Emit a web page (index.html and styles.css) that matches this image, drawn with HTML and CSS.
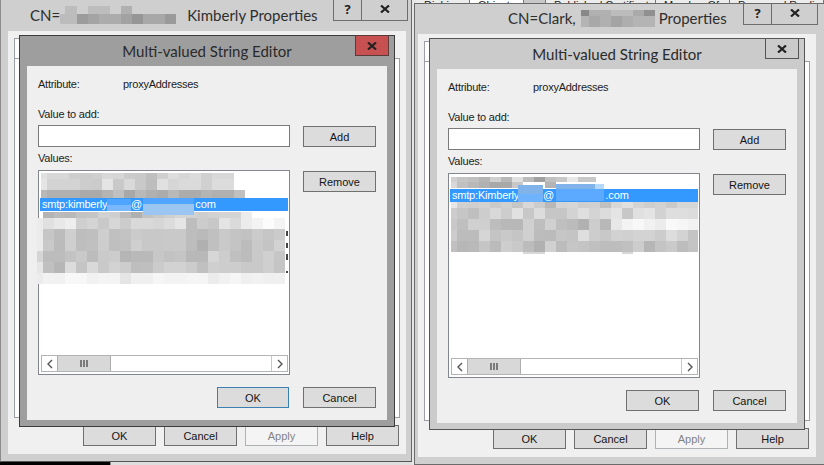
FILE: index.html
```html
<!DOCTYPE html>
<html lang="en">
<head>
<meta charset="utf-8">
<title>Multi-valued String Editor</title>
<link rel="stylesheet" href="styles.css">
</head>
<body>
<div class="tabs-behind">
  <span class="bt bt-a">Dial-in</span><span class="bt bt-b">Object</span><span class="bt bt-c"></span><span class="bt bt-d">Published Certificates</span><span class="bt bt-e">Member Of</span><span class="bt bt-f">Password Replication</span>
</div>
<div class="under"></div>

<section class="win win-left">
  <header class="titlebar">
    <h1 class="wintitle">CN=<svg class="nameblur" width="123" height="18" viewBox="58 6 123 18"><rect x="63" y="6" width="12" height="8" fill="#bdbdbd"/><rect x="86" y="6" width="22" height="8" fill="#bdbdbd"/><rect x="119" y="6" width="11" height="8" fill="#b0b0b0"/><rect x="58" y="14" width="17" height="10" fill="#bcbcbc"/><rect x="75" y="14" width="11" height="10" fill="#9c9c9c"/><rect x="86" y="14" width="11" height="10" fill="#a4a4a4"/><rect x="97" y="14" width="22" height="10" fill="#acacac"/><rect x="119" y="14" width="11" height="10" fill="#a2a2a2"/><rect x="130" y="14" width="11" height="10" fill="#969696"/><rect x="141" y="14" width="22" height="10" fill="#a8a8a8"/><rect x="163" y="14" width="11" height="10" fill="#9a9a9a"/></svg><span class="wintitle-end">Kimberly Properties</span></h1>
    <div class="capbtns">
      <span class="capbtn cap-help">?</span>
      <span class="capbtn cap-close"><svg width="10" height="8" viewBox="0 0 10 8"><path class="xmark" d="M1 0.5 9 7.5M9 0.5 1 7.5"/></svg></span>
    </div>
  </header>
  <div class="client">
    <div class="tabstrip"><div class="tab"></div></div>
    <div class="tabpanel"></div>
    <div class="actions">
      <button class="btn">OK</button><button class="btn">Cancel</button><button class="btn btn-off">Apply</button><button class="btn">Help</button>
    </div>
    <section class="dialog dialog-active">
      <header class="dlg-title">
        <h2 class="dlg-heading">Multi-valued String Editor</h2>
        <span class="dlg-close"><svg width="10" height="8" viewBox="0 0 10 8"><path class="xmark" d="M1 0.5 9 7.5M9 0.5 1 7.5"/></svg></span>
      </header>
      <div class="dlg-client">
        <div class="attr"><span class="attr-k">Attribute:</span><span>proxyAddresses</span></div>
        <div class="body">
          <div class="fields">
            <label class="lbl">Value to add:</label>
            <div class="input"></div>
            <label class="lbl lbl-values">Values:</label>
            <div class="list">
              <div class="rows rows-left"><div class="sel"><span class="t-a">smtp:kimberly.</span>@<span class="gap-b"></span>com</div></div>
              <div class="hscroll">
                <span class="sb-btn"><svg width="8" height="10" viewBox="0 0 8 10"><path class="chev" d="M6 1 2 5 6 9"/></svg></span>
                <span class="sb-thumb"><svg width="9" height="7" viewBox="0 0 9 7"><path class="grip" d="M1 0V7M4 0V7M7 0V7"/></svg></span>
                <span class="sb-track"></span>
                <span class="sb-btn sb-end"><svg width="8" height="10" viewBox="0 0 8 10"><path class="chev" d="M2 1 6 5 2 9"/></svg></span>
              </div>
              <svg class="blur" width="252" height="188" viewBox="38 170 252 188">
                <g class="h6" transform="translate(0 173)"><rect x="41" width="6" fill="#e0e0e0"/><rect x="47" fill="#d8d8d8"/><rect x="58" fill="#d8d8d8"/><rect x="69" fill="#cdcdcd"/><rect x="80" fill="#cbcbcb"/><rect x="91" fill="#cfcfcf"/><rect x="102" fill="#d8d8d8"/><rect x="113" fill="#d6d6d6"/><rect x="124" fill="#cbcbcb"/><rect x="135" fill="#c9c9c9"/><rect x="146" fill="#bfbfbf"/><rect x="157" fill="#cfcfcf"/><rect x="168" fill="#dddddd"/><rect x="179" fill="#d6d6d6"/><rect x="190" fill="#dcdcdc"/><rect x="201" fill="#d0d0d0"/><rect x="212" fill="#d8d8d8"/><rect x="223" fill="#d8d8d8"/></g>
                <g transform="translate(0 179)"><rect x="41" width="6" fill="#e5e5e5"/><rect x="47" fill="#d3d3d3"/><rect x="58" fill="#d3d3d3"/><rect x="69" fill="#d3d3d3"/><rect x="80" fill="#cdcdcd"/><rect x="91" fill="#cbcbcb"/><rect x="102" fill="#e4e4e4"/><rect x="113" fill="#c9c9c9"/><rect x="124" fill="#d9d9d9"/><rect x="135" fill="#c9c9c9"/><rect x="146" fill="#bdbdbd"/><rect x="157" fill="#e0e0e0"/><rect x="168" fill="#d6d6d6"/><rect x="179" fill="#dadada"/><rect x="190" fill="#dadada"/><rect x="201" fill="#d0d0d0"/><rect x="212" fill="#dcdcdc"/><rect x="223" fill="#dcdcdc"/></g>
                <g class="h8" transform="translate(0 190)"><rect x="41" width="6" fill="#b8b8b8"/><rect x="47" fill="#b0b0b0"/><rect x="58" fill="#b0b0b0"/><rect x="69" fill="#b0b0b0"/><rect x="80" fill="#aaaaaa"/><rect x="91" fill="#aaaaaa"/><rect x="102" fill="#b4b4b4"/><rect x="113" fill="#c0c0c0"/><rect x="124" fill="#a8a8a8"/><rect x="135" fill="#b8b8b8"/><rect x="146" fill="#b0b0b0"/><rect x="157" fill="#acacac"/><rect x="168" fill="#b8b8b8"/><rect x="179" fill="#acacac"/><rect x="190" fill="#acacac"/><rect x="201" fill="#b4b4b4"/><rect x="212" fill="#b0b0b0"/><rect x="223" fill="#b0b0b0"/><rect x="234" fill="#c0c0c0"/></g>
                <g class="h6" transform="translate(0 212)"><rect x="43" fill="#b4b4b4"/><rect x="54" fill="#bbbbbb"/><rect x="65" fill="#b9b9b9"/><rect x="76" fill="#c3c3c3"/><rect x="87" fill="#c5c5c5"/><rect x="98" fill="#d2d2d2"/><rect x="109" fill="#cfcfcf"/><rect x="120" fill="#bdbdbd"/><rect x="131" fill="#b0b0b0"/><rect x="142" fill="#c2c2c2"/><rect x="153" fill="#c9c9c9"/><rect x="164" fill="#cfcfcf"/><rect x="175" fill="#d5d5d5"/><rect x="186" fill="#d2d2d2"/><rect x="197" fill="#cecece"/><rect x="208" fill="#d2d2d2"/><rect x="219" fill="#d4d4d4"/><rect x="230" fill="#d4d4d4"/><rect x="241" fill="#ececec"/></g>
                <g transform="translate(0 218)"><rect x="37" width="6" fill="#ebebeb"/><rect x="43" fill="#e0e0e0"/><rect x="54" fill="#e8e8e8"/><rect x="65" fill="#eeeeee"/><rect x="76" fill="#cfcfcf"/><rect x="87" fill="#d4d4d4"/><rect x="98" fill="#c9c9c9"/><rect x="109" fill="#d6d6d6"/><rect x="120" fill="#cccccc"/><rect x="131" fill="#d9d9d9"/><rect x="142" fill="#d9d9d9"/><rect x="153" fill="#d6d6d6"/><rect x="164" fill="#dcdcdc"/><rect x="175" fill="#e5e5e5"/><rect x="186" fill="#bdbdbd"/><rect x="197" fill="#cccccc"/><rect x="208" fill="#c8c8c8"/><rect x="219" fill="#e4e4e4"/><rect x="230" fill="#dadada"/><rect x="241" fill="#ececec"/><rect x="252" fill="#f3f3f3"/><rect x="263" fill="#fcfcfc"/><rect x="274" fill="#f4f4f4"/></g>
                <g transform="translate(0 229)"><rect x="37" width="6" fill="#ebebeb"/><rect x="43" fill="#c6c6c6"/><rect x="54" fill="#bcbcbc"/><rect x="65" fill="#cfcfcf"/><rect x="76" fill="#bdbdbd"/><rect x="87" fill="#bfbfbf"/><rect x="98" fill="#cecece"/><rect x="109" fill="#c0c0c0"/><rect x="120" fill="#c3c3c3"/><rect x="131" fill="#cbcbcb"/><rect x="142" fill="#c8c8c8"/><rect x="153" fill="#c8c8c8"/><rect x="164" fill="#c9c9c9"/><rect x="175" fill="#c9c9c9"/><rect x="186" fill="#bdbdbd"/><rect x="197" fill="#bababa"/><rect x="208" fill="#c0c0c0"/><rect x="219" fill="#c9c9c9"/><rect x="230" fill="#c4c4c4"/><rect x="241" fill="#c2c2c2"/><rect x="252" fill="#cbcbcb"/><rect x="263" fill="#c6c6c6"/><rect x="274" fill="#cbcbcb"/></g>
                <g transform="translate(0 240)"><rect x="37" width="6" fill="#ebebeb"/><rect x="43" fill="#c9c9c9"/><rect x="54" fill="#bbbbbb"/><rect x="65" fill="#cfcfcf"/><rect x="76" fill="#bebebe"/><rect x="87" fill="#c0c0c0"/><rect x="98" fill="#cdcdcd"/><rect x="109" fill="#bfbfbf"/><rect x="120" fill="#c1c1c1"/><rect x="131" fill="#cfcfcf"/><rect x="142" fill="#c8c8c8"/><rect x="153" fill="#c8c8c8"/><rect x="164" fill="#c9c9c9"/><rect x="175" fill="#c9c9c9"/><rect x="186" fill="#bdbdbd"/><rect x="197" fill="#b0b0b0"/><rect x="208" fill="#c0c0c0"/><rect x="219" fill="#c9c9c9"/><rect x="230" fill="#c4c4c4"/><rect x="241" fill="#bcbcbc"/><rect x="252" fill="#c9c9c9"/><rect x="263" fill="#c4c4c4"/><rect x="274" fill="#d2d2d2"/></g>
                <g transform="translate(0 251)"><rect x="37" width="6" fill="#d5d5d5"/><rect x="43" fill="#bcbcbc"/><rect x="54" fill="#bcbcbc"/><rect x="65" fill="#c3c3c3"/><rect x="76" fill="#c9c9c9"/><rect x="87" fill="#bcbcbc"/><rect x="98" fill="#cacaca"/><rect x="109" fill="#cccccc"/><rect x="120" fill="#b5b5b5"/><rect x="131" fill="#b9b9b9"/><rect x="142" fill="#b9b9b9"/><rect x="153" fill="#c7c7c7"/><rect x="164" fill="#c2c2c2"/><rect x="175" fill="#c5c5c5"/><rect x="186" fill="#b8b8b8"/><rect x="197" fill="#b8b8b8"/><rect x="208" fill="#d6d6d6"/><rect x="219" fill="#cdcdcd"/><rect x="230" fill="#c0c0c0"/><rect x="241" fill="#bcbcbc"/><rect x="252" fill="#c9c9c9"/><rect x="263" fill="#d0d0d0"/><rect x="274" fill="#c6c6c6"/></g>
                <g transform="translate(0 262)"><rect x="37" width="6" fill="#e6e6e6"/><rect x="43" fill="#c0c0c0"/><rect x="54" fill="#b6b6b6"/><rect x="65" fill="#dcdcdc"/><rect x="76" fill="#c5c5c5"/><rect x="87" fill="#d9d9d9"/><rect x="98" fill="#c9c9c9"/><rect x="109" fill="#d3d3d3"/><rect x="120" fill="#cdcdcd"/><rect x="131" fill="#bebebe"/><rect x="142" fill="#bfbfbf"/><rect x="153" fill="#cbcbcb"/><rect x="164" fill="#d2d2d2"/><rect x="175" fill="#d2d2d2"/><rect x="186" fill="#cccccc"/><rect x="197" fill="#c0c0c0"/><rect x="208" fill="#cfcfcf"/><rect x="219" fill="#cdcdcd"/><rect x="230" fill="#cdcdcd"/><rect x="241" fill="#c9c9c9"/><rect x="252" fill="#c9c9c9"/><rect x="263" fill="#cfcfcf"/><rect x="274" fill="#c5c5c5"/></g>
                <g transform="translate(0 273)"><rect x="37" width="6" fill="#ececec"/><rect x="43" fill="#f2f2f2"/><rect x="54" fill="#f1f1f1"/><rect x="65" fill="#f8f8f8"/><rect x="76" fill="#f7f7f7"/><rect x="87" fill="#f1f1f1"/><rect x="98" fill="#f4f4f4"/><rect x="109" fill="#f4f4f4"/><rect x="120" fill="#e5e5e5"/><rect x="131" fill="#f0f0f0"/><rect x="142" fill="#f0f0f0"/><rect x="153" fill="#f6f6f6"/><rect x="164" fill="#f3f3f3"/><rect x="175" fill="#f3f3f3"/><rect x="186" fill="#f5f5f5"/><rect x="197" fill="#f5f5f5"/><rect x="208" fill="#ececec"/><rect x="219" fill="#f1f1f1"/><rect x="230" fill="#f6f6f6"/><rect x="241" fill="#efefef"/><rect x="252" fill="#f2f2f2"/><rect x="263" fill="#efefef"/><rect x="274" fill="#f0f0f0"/></g>
                <rect class="speck" x="286" y="231" width="2" height="5"/><rect class="speck" x="286" y="243" width="2" height="5"/><rect class="speck" x="286" y="254" width="2" height="6"/><rect class="speck" x="286" y="271" width="2" height="2"/>
                <rect class="patch-a" x="107" y="199" width="24" height="12"/><rect class="patch-c" x="107" y="205" width="24" height="6"/><rect class="patch-a" x="143" y="198" width="51" height="6"/><rect class="patch-b" x="143" y="204" width="51" height="11"/>
              </svg>
            </div>
          </div>
          <div class="side"><button class="btn">Add</button><button class="btn">Remove</button></div>
        </div>
        <div class="foot"><button class="btn btn-default">OK</button><button class="btn">Cancel</button></div>
      </div>
    </section>
  </div>
</section>

<section class="win win-right">
  <header class="titlebar">
    <h1 class="wintitle">CN=Clark,<svg class="nameblur" width="74" height="17" viewBox="580 12 74 17"><rect x="580" y="12" width="8" height="6" fill="#888"/><rect x="588" y="12" width="22" height="6" fill="#b0b0b0"/><rect x="610" y="12" width="22" height="6" fill="#bcbcbc"/><rect x="632" y="12" width="11" height="6" fill="#aaa"/><rect x="643" y="12" width="11" height="6" fill="#909090"/><rect x="580" y="18" width="8" height="11" fill="#b4b4b4"/><rect x="588" y="18" width="11" height="11" fill="#a8a8a8"/><rect x="599" y="18" width="11" height="11" fill="#b0b0b0"/><rect x="610" y="18" width="11" height="11" fill="#a4a4a4"/><rect x="621" y="18" width="11" height="11" fill="#aeaeae"/><rect x="632" y="18" width="22" height="11" fill="#b4b4b4"/></svg><span class="wintitle-end">Properties</span></h1>
    <div class="capbtns">
      <span class="capbtn cap-help">?</span>
      <span class="capbtn cap-close"><svg width="10" height="8" viewBox="0 0 10 8"><path class="xmark" d="M1 0.5 9 7.5M9 0.5 1 7.5"/></svg></span>
    </div>
  </header>
  <div class="client">
    <div class="tabstrip"><div class="tab"></div></div>
    <div class="tabpanel"></div>
    <div class="actions">
      <button class="btn">OK</button><button class="btn">Cancel</button><button class="btn btn-off">Apply</button><button class="btn">Help</button>
    </div>
    <section class="dialog">
      <header class="dlg-title">
        <h2 class="dlg-heading">Multi-valued String Editor</h2>
        <span class="dlg-close"><svg width="10" height="8" viewBox="0 0 10 8"><path class="xmark" d="M1 0.5 9 7.5M9 0.5 1 7.5"/></svg></span>
      </header>
      <div class="dlg-client">
        <div class="attr"><span class="attr-k">Attribute:</span><span>proxyAddresses</span></div>
        <div class="body">
          <div class="fields">
            <label class="lbl">Value to add:</label>
            <div class="input"></div>
            <label class="lbl lbl-values">Values:</label>
            <div class="list">
              <div class="rows rows-right"><div class="sel"><span class="t-c">smtp:Kimberly.</span>@<span class="gap-d"></span>.com</div></div>
              <div class="hscroll">
                <span class="sb-btn"><svg width="8" height="10" viewBox="0 0 8 10"><path class="chev" d="M6 1 2 5 6 9"/></svg></span>
                <span class="sb-thumb"><svg width="9" height="7" viewBox="0 0 9 7"><path class="grip" d="M1 0V7M4 0V7M7 0V7"/></svg></span>
                <span class="sb-track"></span>
                <span class="sb-btn sb-end"><svg width="8" height="10" viewBox="0 0 8 10"><path class="chev" d="M2 1 6 5 2 9"/></svg></span>
              </div>
              <svg class="blur" width="252" height="188" viewBox="448 173 252 188">
                <g class="h5" transform="translate(0 177)"><rect x="451" width="6" fill="#d0d0d0"/><rect x="457" fill="#c5c5c5"/><rect x="468" fill="#c0c0c0"/><rect x="479" fill="#b5b5b5"/><rect x="490" fill="#d0d0d0"/><rect x="501" fill="#b8b8b8"/><rect x="512" fill="#e0e0e0"/><rect x="523" fill="#bcbcbc"/><rect x="534" fill="#a0a0a0"/><rect x="545" fill="#c0c0c0"/><rect x="556" fill="#c8c8c8"/><rect x="567" fill="#e8e8e8"/><rect x="578" fill="#c8c8c8"/><rect x="589" width="7" fill="#c8c8c8"/></g>
                <g class="h6" transform="translate(0 182)"><rect x="451" width="6" fill="#d8d8d8"/><rect x="457" fill="#c0c0c0"/><rect x="468" fill="#b8b8b8"/><rect x="479" fill="#b0b0b0"/><rect x="490" fill="#a8a8a8"/><rect x="501" fill="#a8a8a8"/><rect x="512" fill="#c8c8c8"/><rect x="545" fill="#b4b4b4"/></g>
                <g class="h6" transform="translate(0 202)"><rect x="451" width="6" fill="#e6e6e6"/><rect x="457" fill="#d0d0d0"/><rect x="468" fill="#cecece"/><rect x="479" fill="#d2d2d2"/><rect x="490" fill="#cacaca"/><rect x="501" fill="#d0d0d0"/><rect x="512" fill="#c6c6c6"/><rect x="523" fill="#d8d8d8"/><rect x="534" fill="#cccccc"/><rect x="545" fill="#b8b8b8"/><rect x="556" fill="#d4d4d4"/><rect x="567" fill="#d6d6d6"/><rect x="578" fill="#cecece"/><rect x="589" fill="#d0d0d0"/><rect x="600" fill="#c0c0c0"/><rect x="611" fill="#d8d8d8"/><rect x="622" fill="#e0e0e0"/><rect x="633" fill="#d4d4d4"/><rect x="644" fill="#cecece"/><rect x="655" fill="#d2d2d2"/><rect x="666" fill="#cacaca"/><rect x="677" fill="#d6d6d6"/><rect x="688" width="10" fill="#d6d6d6"/></g>
                <g transform="translate(0 208)"><rect x="451" width="6" fill="#cccccc"/><rect x="457" fill="#c6c6c6"/><rect x="468" fill="#bfbfbf"/><rect x="479" fill="#cdcdcd"/><rect x="490" fill="#d8d8d8"/><rect x="501" fill="#cdcdcd"/><rect x="512" fill="#e1e1e1"/><rect x="523" fill="#c7c7c7"/><rect x="534" fill="#dcdcdc"/><rect x="545" fill="#c6c6c6"/><rect x="556" fill="#c6c6c6"/><rect x="567" fill="#d3d3d3"/><rect x="578" fill="#dfdfdf"/><rect x="589" fill="#d4d4d4"/><rect x="600" fill="#dcdcdc"/><rect x="611" fill="#e4e4e4"/><rect x="622" fill="#c7c7c7"/><rect x="633" fill="#e0e0e0"/><rect x="644" fill="#e4e4e4"/><rect x="655" fill="#d2d2d2"/><rect x="666" fill="#dedede"/><rect x="677" fill="#dedede"/><rect x="688" width="10" fill="#dcdcdc"/></g>
                <g transform="translate(0 219)"><rect x="451" width="6" fill="#c8c8c8"/><rect x="457" fill="#bfbfbf"/><rect x="468" fill="#d0d0d0"/><rect x="479" fill="#cfcfcf"/><rect x="490" fill="#bdbdbd"/><rect x="501" fill="#b8b8b8"/><rect x="512" fill="#b8b8b8"/><rect x="523" fill="#d0d0d0"/><rect x="534" fill="#bebebe"/><rect x="545" fill="#d0d0d0"/><rect x="556" fill="#bfbfbf"/><rect x="567" fill="#bbbbbb"/><rect x="578" fill="#b1b1b1"/><rect x="589" fill="#cdcdcd"/><rect x="600" fill="#b8b8b8"/><rect x="611" fill="#e7e7e7"/><rect x="622" fill="#f3f3f3"/><rect x="633" fill="#f8f8f8"/><rect x="644" fill="#f1f1f1"/><rect x="655" fill="#ececec"/><rect x="666" fill="#f9f9f9"/><rect x="677" fill="#f6f6f6"/><rect x="688" width="10" fill="#f2f2f2"/></g>
                <g transform="translate(0 230)"><rect x="451" width="6" fill="#cccccc"/><rect x="457" fill="#bcbcbc"/><rect x="468" fill="#bcbcbc"/><rect x="479" fill="#d6d6d6"/><rect x="490" fill="#c4c4c4"/><rect x="501" fill="#c9c9c9"/><rect x="512" fill="#c5c5c5"/><rect x="523" fill="#d0d0d0"/><rect x="534" fill="#bcbcbc"/><rect x="545" fill="#bbbbbb"/><rect x="556" fill="#c6c6c6"/><rect x="567" fill="#c4c4c4"/><rect x="578" fill="#dedede"/><rect x="589" fill="#cdcdcd"/><rect x="600" fill="#c8c8c8"/><rect x="611" fill="#d2d2d2"/><rect x="622" fill="#d0d0d0"/><rect x="633" fill="#d3d3d3"/><rect x="644" fill="#d3d3d3"/><rect x="655" fill="#cccccc"/><rect x="666" fill="#dddddd"/><rect x="677" fill="#d3d3d3"/><rect x="688" width="10" fill="#c4c4c4"/></g>
                <g transform="translate(0 241)"><rect x="451" width="6" fill="#c0c0c0"/><rect x="457" fill="#b7b7b7"/><rect x="468" fill="#b9b9b9"/><rect x="479" fill="#c5c5c5"/><rect x="490" fill="#bbbbbb"/><rect x="501" fill="#cecece"/><rect x="512" fill="#c9c9c9"/><rect x="523" fill="#bcbcbc"/><rect x="534" fill="#b1b1b1"/><rect x="545" fill="#d0d0d0"/><rect x="556" fill="#bcbcbc"/><rect x="567" fill="#c6c6c6"/><rect x="578" fill="#c4c4c4"/><rect x="589" fill="#c0c0c0"/><rect x="600" fill="#bdbdbd"/><rect x="611" fill="#bdbdbd"/><rect x="622" fill="#c0c0c0"/><rect x="633" fill="#cdcdcd"/><rect x="644" fill="#b6b6b6"/><rect x="655" fill="#c4c4c4"/><rect x="666" fill="#cacaca"/><rect x="677" fill="#bdbdbd"/><rect x="688" width="10" fill="#c3c3c3"/></g>
                <rect class="bit" x="523" y="252" width="22" height="2"/><rect class="bit" x="622" y="252" width="11" height="2"/>
                <rect class="patch-d" x="518" y="185" width="25" height="9"/><rect class="patch-e" x="518" y="194" width="25" height="8"/><rect class="patch-d" x="556" y="184" width="48" height="5"/><rect class="patch-f" x="556" y="189" width="48" height="12"/><rect class="patch-g" x="595" y="184" width="9" height="5"/>
              </svg>
            </div>
          </div>
          <div class="side"><button class="btn">Add</button><button class="btn">Remove</button></div>
        </div>
        <div class="foot"><button class="btn">OK</button><button class="btn">Cancel</button></div>
      </div>
    </section>
  </div>
</section>
</body>
</html>
```

FILE: styles.css
```css
* { box-sizing: border-box; }
html, body { margin: 0; padding: 0; }
body {
  position: relative;
  width: 824px;
  height: 465px;
  overflow: hidden;
  background: #e6e6e6;
  font: 11px "Liberation Sans", Arial, sans-serif;
  color: #1c1c1c;
}

/* things peeking out from behind the two windows */
.tabs-behind {
  position: absolute;
  left: 416px;
  top: 0;
  height: 3px;
  width: 408px;
  display: flex;
  overflow: hidden;
  font-size: 11px;
  line-height: 11px;
  background: #ececec;
}
.bt { display: block; height: 3px; padding-left: 8px; border-right: 1px solid #777; white-space: nowrap; overflow: hidden; }
.bt-a { width: 54px; }
.bt-b { width: 54px; background: #fff; }
.bt-c { width: 22px; background: #c8c8c8; }
.bt-d { width: 110px; }
.bt-e { width: 74px; }
.bt-f { flex: 1; }
.under {
  position: absolute;
  left: 0;
  top: 461px;
  width: 412px;
  height: 4px;
  background: linear-gradient(90deg, #000 110px, #8a8a8a 110px, #8a8a8a 111px, #dedede 111px);
  border-top: 1px solid #8a8a8a;
}

/* windows on the desktop */
.win {
  position: absolute;
  width: 412px;
  height: 462px;
  background: #cfcfcf;
  display: flex;
  flex-direction: column;
}
.win-left {
  left: 0;
  top: 0;
  border-left: 1px solid #8c8c8c;
  border-right: 1px solid #6a6a6a;
  border-bottom: 1px solid #555;
  padding-left: 7px;
  padding-right: 5px;
}
.win-right {
  left: 414px;
  top: 3px;
  width: 410px;
  border-top: 1px solid #6a6a6a;
  border-left: 1px solid #6a6a6a;
  border-bottom: 1px solid #6a6a6a;
  padding-left: 3px;
  padding-right: 8px;
}
.titlebar { height: 31px; display: flex; flex: none; align-items: flex-start; }
.win-right .titlebar { height: 30px; }
.wintitle {
  margin: 0;
  font: 400 15px/20px Lato, sans-serif;
  color: #2e2e2e;
  display: flex;
  align-items: center;
  white-space: nowrap;
}
.win-left .wintitle { padding: 5px 0 0 22px; }
.win-right .wintitle { padding: 4px 0 0 90px; }
.nameblur { display: block; flex: none; }
.win-right .nameblur { margin-left: 5px; }
.wintitle-end { margin-left: 4px; }
.capbtns { margin-left: auto; display: flex; }
.win-left .capbtns { margin-right: -2px; }
.win-right .capbtns { margin-right: -2px; }
.capbtn {
  height: 21px;
  border: 1px solid #6e6e6e;
  border-top: 0;
  display: flex;
  align-items: center;
  justify-content: center;
  font: 700 13px/1 "Open Sans", sans-serif;
  color: #222;
}
.win-right .capbtn { height: 21px; }
.cap-help { width: 29px; padding-bottom: 2px; }
.cap-close { width: 46px; border-left: 0; padding-bottom: 3px; }
.xmark { fill: none; stroke: #222; stroke-width: 2.2; }

.client {
  position: relative;
  width: 398px;
  height: 423px;
  flex: none;
  background: #f0f0f0;
  padding: 7px 6px 8px;
  display: flex;
  flex-direction: column;
}
.tabstrip { height: 20px; flex: none; }
.tab { width: 130px; height: 21px; background: #fff; border: 1px solid #9c9fa8; border-bottom: 0; }
.tabpanel { height: 360px; flex: none; background: #fff; border: 1px solid #9c9fa8; }
.actions { margin-top: 7px; display: flex; justify-content: flex-end; gap: 8px; padding-right: 1px; }

.btn {
  width: 73px;
  height: 21px;
  padding: 1px 0 0;
  margin: 0;
  background: #dcdcdc;
  border: 1px solid #707070;
  border-radius: 0;
  font: 11px/17px "Liberation Sans", Arial, sans-serif;
  color: #141414;
}
.btn-off { background: #f4f4f4; border-color: #adb2b5; color: #838383; }
.btn-default { border-color: #3c7fb1; width: 72px; }

/* modal dialog over the window */
.dialog {
  position: absolute;
  left: 11px;
  top: 4px;
  width: 376px;
  height: 392px;
  background: #cbcbcb;
  border: 1px solid #555;
  padding: 0 7px 6px;
  display: flex;
  flex-direction: column;
}
.dialog-active { background: #9e9e9e; border-color: #3c3c3c; }
.dlg-title { height: 30px; flex: none; position: relative; display: flex; justify-content: center; padding-top: 5px; }
.dlg-heading { margin: 0; font: 400 15px/20px Lato, sans-serif; color: #2a2a2a; white-space: nowrap; }
.dlg-close {
  position: absolute;
  right: -2px;
  top: -1px;
  width: 34px;
  height: 21px;
  border: 1px solid #555;
  display: flex;
  align-items: center;
  justify-content: center;
}
.dialog-active .dlg-close { background: #c75050; border-color: #5a3a3a; }

.dlg-client {
  flex: 1;
  background: #efefef;
  padding: 11px 11px 0;
  display: flex;
  flex-direction: column;
}
.attr { height: 14px; line-height: 14px; display: flex; letter-spacing: -0.25px; }
.attr-k { width: 85px; }
.body { display: flex; gap: 13px; margin-top: 16px; }
.fields { width: 252px; display: flex; flex-direction: column; }
.lbl { height: 14px; line-height: 14px; display: block; letter-spacing: -0.2px; }
.lbl-values { margin-top: 4px; }
.input { height: 22px; margin-top: 4px; background: #fff; border: 1px solid #7a7a7a; }
.list {
  position: relative;
  height: 205px;
  margin-top: 5px;
  background: #fff;
  border: 1px solid #82878f;
  padding: 1px;
  display: flex;
  flex-direction: column;
}
.rows { flex: 1; }
.rows-left { padding-top: 26px; }
.rows-right { padding-top: 14px; }
.sel {
  height: 13px;
  background: #3399ff;
  color: #fff;
  line-height: 13px;
  padding-left: 2px;
  white-space: nowrap;
}
.t-a { display: inline-block; width: 89px; letter-spacing: -0.2px; }
.t-c { display: inline-block; width: 91px; letter-spacing: -0.2px; }
.gap-b { display: inline-block; width: 53px; }
.gap-d { display: inline-block; width: 51px; }
.blur { position: absolute; left: -1px; top: -1px; overflow: visible; pointer-events: none; }
.blur g rect { width: 11px; height: 11px; }
.blur .h5 rect { height: 5px; }
.blur .h6 rect { height: 6px; }
.blur .h8 rect { height: 8px; }
.blur g rect[width="6"] { width: 6px; }
.blur g rect[width="7"] { width: 7px; }
.blur g rect[width="10"] { width: 10px; }
.blur .speck { fill: #444; }
.blur .bit { fill: #d8d8d8; }
.blur .patch-a { fill: #4fa5ff; }
.blur .patch-b { fill: #9cc6f2; }
.blur .patch-c { fill: #79b8ff; }
.blur .patch-d { fill: #7fb3ea; }
.blur .patch-e { fill: #6fb3ff; }
.blur .patch-f { fill: #5baaff; }
.blur .patch-g { fill: #b5d8ff; }

.hscroll {
  height: 17px;
  flex: none;
  margin: 0 0 1px 1px;
  border: 1px solid #b4b4b4;
  display: flex;
  background: #fff;
}
.sb-btn { width: 16px; flex: none; display: flex; align-items: center; justify-content: center; }
.sb-btn:first-child { width: 15px; }
.sb-end { border-left: 1px solid #c8c8c8; }
.sb-thumb {
  width: 54px;
  flex: none;
  background: #d8d8d8;
  border: 1px solid #adadad;
  border-width: 0 1px;
  display: flex;
  align-items: center;
  justify-content: center;
}
.sb-track { flex: 1; }
.chev { fill: none; stroke: #555; stroke-width: 1.4; }
.grip { fill: none; stroke: #555; stroke-width: 1.4; }

.side { display: flex; flex-direction: column; gap: 24px; padding-top: 19px; }
.foot { margin-top: 12px; display: flex; justify-content: flex-end; gap: 14px; }
```
